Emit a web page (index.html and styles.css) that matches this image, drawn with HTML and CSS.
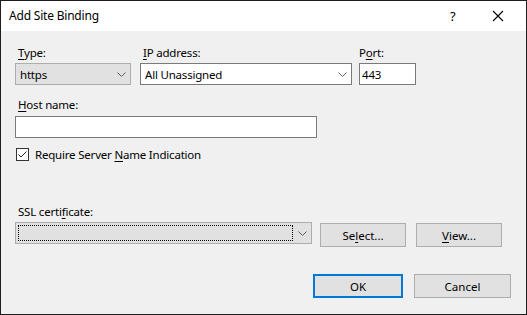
FILE: index.html
```html
<!DOCTYPE html>
<html lang="en">
<head>
  <meta charset="UTF-8">
  <title>Add Site Binding</title>
  <link rel="stylesheet" href="styles.css">
</head>
<body>
  <div class="window">
    <div class="titlebar">
      <span class="title">Add Site Binding</span>
      <span class="help">?</span>
      <span class="close">
        <svg width="12" height="12" viewBox="0 0 12 12"><path d="M1 1L11 11M11 1L1 11" stroke="#000" stroke-width="1.1" fill="none"/></svg>
      </span>
    </div>

    <div class="content">
      <div class="row">
        <div class="field type">
          <label><u>T</u>ype:</label>
          <div class="combo gray">
            <span class="value">https</span>
            <span class="arrow"><svg width="9" height="5" viewBox="0 0 9 5"><path d="M0.5 0.5L4.5 4.5L8.5 0.5" stroke="#606060" fill="none"/></svg></span>
          </div>
        </div>
        <div class="field ip">
          <label><u>I</u>P address:</label>
          <div class="combo white">
            <span class="value">All Unassigned</span>
            <span class="arrow"><svg width="9" height="5" viewBox="0 0 9 5"><path d="M0.5 0.5L4.5 4.5L8.5 0.5" stroke="#606060" fill="none"/></svg></span>
          </div>
        </div>
        <div class="field port">
          <label>P<u>o</u>rt:</label>
          <div class="textbox"><span class="value">443</span></div>
        </div>
      </div>

      <div class="field host">
        <label><u>H</u>ost name:</label>
        <div class="textbox"></div>
      </div>

      <div class="check-row">
        <span class="checkbox">
          <svg width="11" height="11" viewBox="0 0 11 11"><path d="M1.5 5.5L4 8L9.5 2.5" stroke="#222" stroke-width="1" fill="none"/></svg>
        </span>
        <span>Require Server <u>N</u>ame Indication</span>
      </div>

      <div class="field ssl">
        <label>SSL certi<u>f</u>icate:</label>
        <div class="ssl-row">
          <div class="combo gray cert">
            <span class="focus"></span>
            <span class="arrow"><svg width="9" height="5" viewBox="0 0 9 5"><path d="M0.5 0.5L4.5 4.5L8.5 0.5" stroke="#606060" fill="none"/></svg></span>
          </div>
          <button class="btn select">Se<u>l</u>ect...</button>
          <button class="btn view"><u>V</u>iew...</button>
        </div>
      </div>

      <div class="actions">
        <button class="btn ok">OK</button>
        <button class="btn cancel">Cancel</button>
      </div>
    </div>
  </div>
</body>
</html>
```

FILE: styles.css
```css
* {
  box-sizing: border-box;
}

body {
  margin: 0;
  font-family: "Noto Sans", Arial, sans-serif;
  font-size: 11.5px;
  letter-spacing: -0.2px;
  color: #000;
}

u {
  text-decoration-thickness: 1px;
  text-underline-offset: 2px;
}

.window {
  width: 527px;
  height: 315px;
  border: 1px solid #1e1e1e;
  background: #f0f0f0;
  display: flex;
  flex-direction: column;
}

.titlebar {
  height: 30px;
  background: #fff;
  display: flex;
  align-items: center;
  flex-shrink: 0;
}

.title {
  margin-left: 8px;
  flex: 1;
  font-size: 12px;
  margin-bottom: 1px;
}

.help {
  width: 12px;
  font-size: 13px;
  margin-right: 30px;
}

.close {
  display: flex;
  margin-right: 22px;
}

.content {
  padding: 14px 15px 0 14px;
  display: flex;
  flex-direction: column;
}

.row {
  display: flex;
}

.field label {
  display: block;
  height: 16px;
  line-height: 16px;
  margin: 0 0 2px 3px;
}

.type {
  width: 116px;
  margin-right: 9px;
}

.ip {
  width: 212px;
  margin-right: 7px;
}

.port {
  width: 57px;
}

.port label {
  margin-left: 0;
}

.combo, .textbox {
  height: 22px;
  display: flex;
  align-items: center;
  position: relative;
}

.combo.gray {
  background: #e1e1e1;
  border: 1px solid #adadad;
}

.combo.white, .textbox {
  background: #fff;
  border: 1px solid #7a7a7a;
}

.value {
  padding-left: 4px;
  flex: 1;
}

.textbox .value {
  padding-left: 2px;
}

.arrow {
  display: flex;
  width: 18px;
  justify-content: center;
}

.host {
  margin-top: 12px;
}

.host label {
  margin-bottom: 3px;
}

.host .textbox {
  width: 302px;
}

.check-row {
  display: flex;
  align-items: center;
  margin-top: 10px;
  margin-left: 1px;
  height: 13px;
}

.checkbox {
  width: 13px;
  height: 13px;
  border: 1px solid #333;
  background: #fff;
  display: flex;
  align-items: center;
  justify-content: center;
  margin-right: 6px;
}

.ssl {
  margin-top: 43px;
}

.ssl-row {
  display: flex;
  align-items: flex-start;
}

.cert {
  width: 297px;
  margin-right: 8px;
}

.focus {
  flex: 1;
  height: 16px;
  margin: 0 0 0 2px;
  border: 1px dotted #000;
}

.btn {
  font: inherit;
  color: #000;
  height: 24px;
  background: #e1e1e1;
  border: 1px solid #adadad;
  padding: 0;
  margin-top: 1px;
}

.select, .view {
  width: 86px;
}

.select {
  margin-right: 10px;
}

.actions {
  display: flex;
  justify-content: flex-end;
  margin-top: 26px;
}

.ok {
  width: 90px;
  border: 2px solid #0078d7;
  margin-right: 11px;
}

.cancel {
  width: 97px;
}
```
